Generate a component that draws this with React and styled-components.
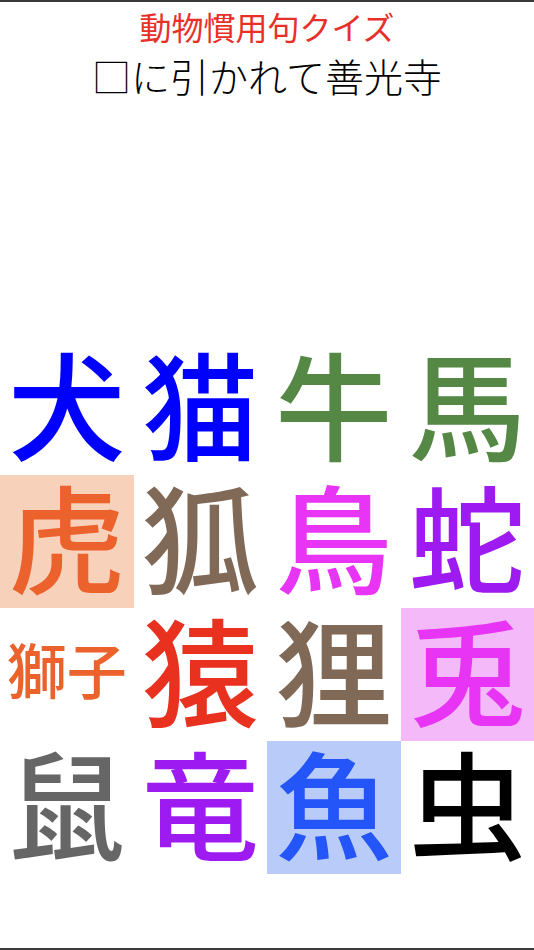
import React from 'react';
import styled, { createGlobalStyle } from 'styled-components';

const GlobalStyle = createGlobalStyle`
  html, body {
    margin: 0;
    padding: 0;
    background: #ffffff;
  }
  body {
    font-family: "Noto Sans CJK JP", "Noto Sans", sans-serif;
  }
`;

const Screen = styled.div`
  width: 534px;
  height: 950px;
  box-sizing: border-box;
  border-top: 2px solid #3a3a3a;
  border-bottom: 2px solid #3a3a3a;
  display: flex;
  flex-direction: column;
  background: #ffffff;
`;

const Header = styled.header`
  display: flex;
  flex-direction: column;
  align-items: center;
  padding-top: 5px;
`;

const Title = styled.h1`
  margin: 0;
  font-size: 32px;
  font-weight: 400;
  line-height: 38px;
  color: #e8302a;
`;

const Question = styled.h2`
  margin: 0;
  margin-top: 6px;
  font-size: 39px;
  font-weight: 300;
  line-height: 48px;
  color: #000000;
`;

const Board = styled.div`
  margin-top: auto;
  margin-bottom: 74px;
  display: grid;
  grid-template-columns: repeat(4, 1fr);
  grid-auto-rows: 133px;
`;

const Tile = styled.button`
  border: 0;
  margin: 0;
  padding: 0 0 14px 0;
  background: ${({ $bg }) => $bg || 'transparent'};
  color: ${({ $color }) => $color};
  font-family: "Noto Sans CJK JP", sans-serif;
  font-size: ${({ $small }) => ($small ? '60px' : '117px')};
  font-weight: 500;
  line-height: 1;
  display: flex;
  align-items: center;
  justify-content: center;
  white-space: nowrap;
`;

const animals = [
  { name: '犬', color: '#0000ff' },
  { name: '猫', color: '#0000ff' },
  { name: '牛', color: '#548844' },
  { name: '馬', color: '#548844' },
  { name: '虎', color: '#ec622c', bg: '#f7d1ba' },
  { name: '狐', color: '#816957' },
  { name: '鳥', color: '#e834f4' },
  { name: '蛇', color: '#9d1af0' },
  { name: '獅子', color: '#ec622c', small: true },
  { name: '猿', color: '#e8311f' },
  { name: '狸', color: '#816957' },
  { name: '兎', color: '#e834f4', bg: '#f3b9f9' },
  { name: '鼠', color: '#666666' },
  { name: '竜', color: '#9d1af0' },
  { name: '魚', color: '#2455f8', bg: '#b8cbf9' },
  { name: '虫', color: '#000000' },
];

export default function App() {
  return (
    <>
      <GlobalStyle />
      <Screen>
        <Header>
          <Title>動物慣用句クイズ</Title>
          <Question>□に引かれて善光寺</Question>
        </Header>
        <Board>
          {animals.map((a) => (
            <Tile key={a.name} $color={a.color} $bg={a.bg} $small={a.small}>
              {a.name}
            </Tile>
          ))}
        </Board>
      </Screen>
    </>
  );
}
